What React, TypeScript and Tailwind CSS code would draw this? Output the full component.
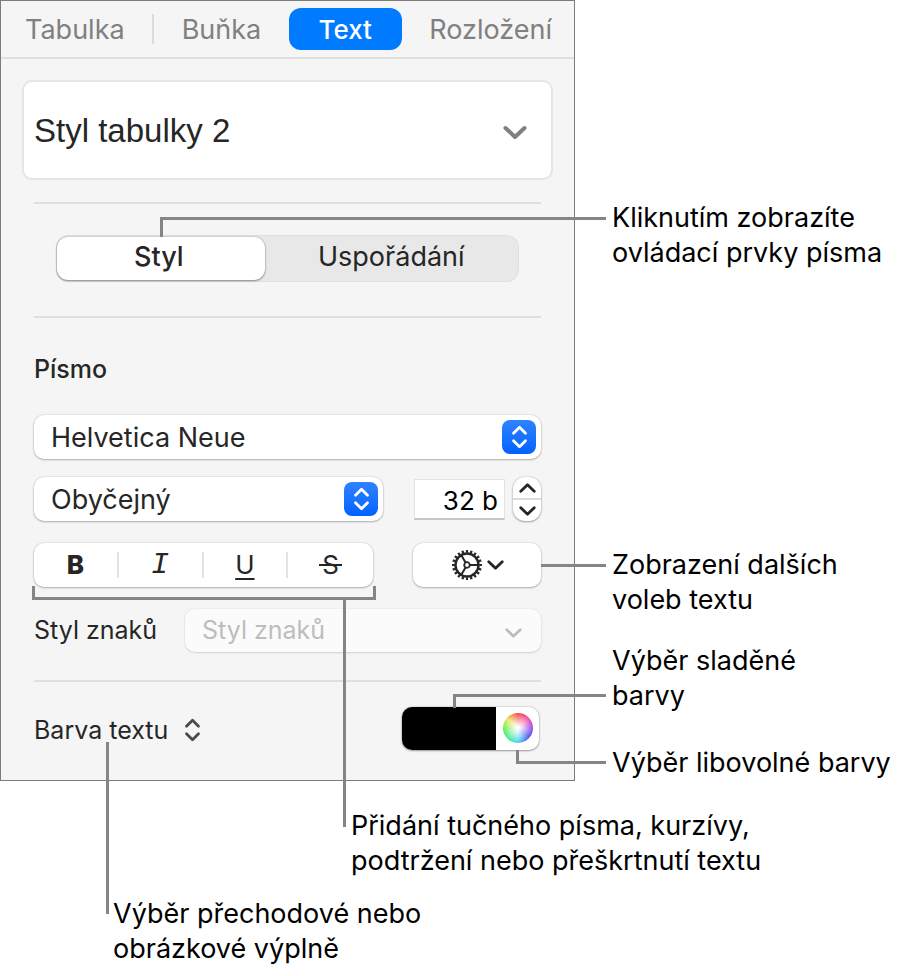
import type { ReactNode } from 'react'

const tabs = ['Tabulka', 'Buňka', 'Text', 'Rozložení']

const gearSpokes = [0, 120, 240]

function Chevron({ className }: { className: string }) {
  return (
    <svg viewBox="0 0 24 14" fill="none" stroke="currentColor" strokeLinecap="round" strokeLinejoin="round" className={className}>
      <path d="M2.5 2.5 12 11.5l9.5-9" />
    </svg>
  )
}

function UpDown({ className }: { className: string }) {
  return (
    <svg viewBox="0 0 18 26" fill="none" stroke="currentColor" strokeLinecap="round" strokeLinejoin="round" className={className}>
      <path d="M2.5 9 9 2.5 15.5 9M2.5 17 9 23.5 15.5 17" />
    </svg>
  )
}

function Gear() {
  return (
    <svg viewBox="-16 -16 32 32" fill="none" stroke="currentColor" className="size-8">
      <circle r="11.5" strokeWidth="2.4" />
      <circle r="13.6" strokeWidth="2.8" pathLength="40" strokeDasharray="1 1" strokeDashoffset="0.5" />
      <circle r="2.8" strokeWidth="1.8" />
      {gearSpokes.map(angle => (
        <path key={angle} d="M3 0H11" strokeWidth="2" transform={`rotate(${angle})`} />
      ))}
    </svg>
  )
}

function PopUp({ label, value }: { label: string; value: string }) {
  return (
    <div className="relative flex-1">
      <select
        aria-label={label}
        className="block h-11 w-full appearance-none rounded-[10px] bg-white pl-[17px] pr-12 pt-0.5 text-[27px] text-[#262626] shadow-[0_0_2px_rgba(0,0,0,0.2),0_1px_2px_rgba(0,0,0,0.25)]"
      >
        <option>{value}</option>
      </select>
      <span className="pointer-events-none absolute right-[5px] top-[5px] flex size-[34px] items-center justify-center rounded-lg bg-linear-to-b from-[#2e83ff] to-[#0061ff] text-white">
        <UpDown className="h-6 w-[17px] stroke-3" />
      </span>
    </div>
  )
}

function Divider({ className }: { className: string }) {
  return <hr className={`h-0.5 border-0 bg-[#dfdfdf] ${className}`} />
}

function Callout({ className, children }: { className: string; children: ReactNode }) {
  return <p className={`text-[27px] leading-[35px] text-black ${className}`}>{children}</p>
}

export default function App() {
  return (
    <main className="bg-white font-['Inter','Liberation_Sans',sans-serif]">
      <div className="grid grid-cols-[575fr_329fr]">
        {/* Sidebar */}
        <section className="min-w-0 border border-[#7c7c7f] bg-[#f5f5f5] pb-[30px] text-[#262626]">
          <nav className="flex h-[58px] items-center justify-between border-b-2 border-[#dfdfdf] pl-6 pr-[22px] text-[27px] text-[#808080]">
            {tabs.map((tab, i) => (
              <div key={tab} className="contents">
                {tab === 'Text' ? (
                  <button className="h-[42px] w-[113px] rounded-xl bg-[#007aff] text-[26px] font-medium text-white">{tab}</button>
                ) : (
                  <button className="pt-0.5">{tab}</button>
                )}
                {i === 0 && <span className="h-[30px] w-0.5 bg-[#dcdcdc]" />}
              </div>
            ))}
          </nav>

          <button className="mx-[21px] mt-[21px] flex h-[100px] w-[calc(100%-42px)] items-center justify-between rounded-[10px] border-2 border-[#e5e5e5] bg-white pl-[10px] pr-6 font-['Liberation_Sans',sans-serif] text-[33px]">
            <span className="pt-0.5">Styl tabulky 2</span>
            <Chevron className="mt-1 h-[15px] w-6 stroke-4 text-[#808080]" />
          </button>

          <div className="px-[33px]">
            <Divider className="mt-[22px]" />

            <div className="relative mx-[22px] mt-[31px] grid h-[47px] grid-cols-[208fr_254fr] rounded-xl border border-[#e0e0e0] bg-[#e8e8e8] text-[27px]">
              <button className="my-px rounded-[11px] bg-white pb-0.5 pr-1 font-medium shadow-[0_0_2px_rgba(0,0,0,0.3),0_1px_2px_rgba(0,0,0,0.35)]">Styl</button>
              <button className="pb-0.5">Uspořádání</button>
              <span className="pointer-events-none absolute -right-[88px] -top-[19px] left-[103px] h-[20px] border-l-3 border-t-3 border-[#858585]" />
            </div>

            <Divider className="mt-[34px]" />

            <h2 className="mt-[35px] text-[25px] font-medium leading-8">Písmo</h2>

            <div className="mt-[30px] flex">
              <PopUp label="Písmo" value="Helvetica Neue" />
            </div>

            <div className="mt-[18px] flex items-center">
              <PopUp label="Řez písma" value="Obyčejný" />
              <input
                aria-label="Velikost písma"
                defaultValue="32 b"
                className="ml-[31px] h-[41px] w-[91px] border border-b-2 border-[#e2e2e2] border-b-[#c6c6c6] bg-white pr-1.5 pt-1 text-right text-[26px] text-black"
              />
              <div className="ml-2 flex h-11 w-7 flex-col overflow-hidden rounded-xl bg-white shadow-[0_0_2px_rgba(0,0,0,0.25),0_1px_2px_rgba(0,0,0,0.3)]">
                <button aria-label="Zvětšit" className="flex flex-1 items-center justify-center border-b-2 border-[#dcdcdc]">
                  <Chevron className="h-[10px] w-[17px] rotate-180 stroke-4" />
                </button>
                <button aria-label="Zmenšit" className="flex flex-1 items-center justify-center">
                  <Chevron className="h-[10px] w-[17px] stroke-4" />
                </button>
              </div>
            </div>

            <div className="mt-[22px] flex">
              <div className="relative mr-10 flex-1">
                <div className="grid h-11 grid-cols-4 items-center divide-x-2 divide-[#e3e3e3] rounded-[10px] bg-white text-[26px] shadow-[0_0_2px_rgba(0,0,0,0.2),0_1px_2px_rgba(0,0,0,0.25)]">
                  <button aria-label="Tučné" className="h-[26px] font-extrabold leading-[22px]">B</button>
                  <button aria-label="Kurzíva" className="h-[26px] font-['Liberation_Mono',monospace] text-[30px] italic leading-[22px]">I</button>
                  <button aria-label="Podtržené" className="h-[26px] leading-[22px] underline decoration-2 underline-offset-4">U</button>
                  <button aria-label="Přeškrtnuté" className="relative h-[26px] leading-[22px]">
                    S
                    <span className="absolute inset-x-[31px] top-3 h-0.5 bg-[#262626]" />
                  </button>
                </div>
                <span className="pointer-events-none absolute -left-0.5 -right-[3px] top-[43px] h-[14px] border-3 border-t-0 border-[#858585]" />
                <span className="pointer-events-none absolute left-[309px] top-[57px] z-10 h-[227px] w-[3px] bg-[#858585]" />
              </div>
              <div className="relative">
                <button aria-label="Další volby textu" className="flex h-11 w-32 items-center justify-center gap-1 rounded-[10px] bg-white shadow-[0_0_2px_rgba(0,0,0,0.2),0_1px_2px_rgba(0,0,0,0.25)]">
                  <Gear />
                  <Chevron className="h-[10px] w-[17px] stroke-4" />
                </button>
                <span className="pointer-events-none absolute -right-[65px] left-full top-[21px] h-[3px] bg-[#858585]" />
              </div>
            </div>

            <div className="mt-[22px] flex items-center">
              <label htmlFor="char-style" className="w-[151px] text-[25px]">Styl znaků</label>
              <div className="relative flex-1">
                <select
                  id="char-style"
                  disabled
                  className="block h-[43px] w-full appearance-none rounded-[10px] bg-[#fbfbfb] pl-[17px] text-[25px] text-[#bdbdbd] opacity-100 shadow-[0_0_2px_rgba(0,0,0,0.1),0_1px_2px_rgba(0,0,0,0.12)]"
                >
                  <option>Styl znaků</option>
                </select>
                <Chevron className="pointer-events-none absolute right-[19px] top-[19px] h-[10px] w-[17px] stroke-4 text-[#bdbdbd]" />
              </div>
            </div>

            <Divider className="mt-7" />

            <div className="mt-6 flex items-center justify-between">
              <div className="relative">
                <button className="flex h-11 items-center gap-4 pt-1.5 text-[25px]">
                  Barva textu
                  <UpDown className="mb-0.5 h-6 w-[17px] stroke-3 text-[#4a4a4a]" />
                </button>
                <span className="pointer-events-none absolute left-[72px] top-9 h-[172px] w-[3px] bg-[#858585]" />
              </div>
              <div className="relative mr-0.5 flex h-[43px] w-[137px] rounded-[10px] bg-white shadow-[0_0_2px_rgba(0,0,0,0.3),0_1px_2px_rgba(0,0,0,0.3)]">
                <button aria-label="Sladěná barva" className="w-[94px] rounded-l-[10px] bg-black" />
                <button aria-label="Libovolná barva" className="flex flex-1 items-center justify-center">
                  <span className="size-[30px] rounded-full bg-[radial-gradient(circle,#ffffff_5%,rgba(255,255,255,0.55)_35%,rgba(255,255,255,0)_68%),conic-gradient(#f25050,#f24fb0_50deg,#a050e8_90deg,#4a5af0_130deg,#50d8f0_180deg,#50ee80_235deg,#70ee50_270deg,#e8e850_310deg,#f25050)]" />
                </button>
                <span className="pointer-events-none absolute -right-[67px] -top-[13px] left-[51px] h-[14px] border-l-3 border-t-3 border-[#858585]" />
                <span className="pointer-events-none absolute -right-[67px] left-[114px] top-[43px] h-[14px] border-b-3 border-l-3 border-[#858585]" />
              </div>
            </div>
          </div>
        </section>

        {/* Callouts beside the sidebar */}
        <aside className="whitespace-nowrap pl-[37px] pt-[200px]">
          <Callout className="">
            Kliknutím zobrazíte
            <br />
            ovládací prvky písma
          </Callout>
          <Callout className="mt-[277px]">
            Zobrazení dalších
            <br />
            voleb textu
          </Callout>
          <Callout className="mt-[26px]">
            Výběr sladěné
            <br />
            barvy
          </Callout>
          <Callout className="mt-8">Výběr libovolné barvy</Callout>
        </aside>
      </div>

      {/* Callouts below the sidebar */}
      <Callout className="mt-[27px] pl-[351px]">
        Přidání tučného písma, kurzívy,
        <br />
        podtržení nebo přeškrtnutí textu
      </Callout>
      <Callout className="mt-[18px] pl-[113px]">
        Výběr přechodové nebo
        <br />
        obrázkové výplně
      </Callout>
    </main>
  )
}
